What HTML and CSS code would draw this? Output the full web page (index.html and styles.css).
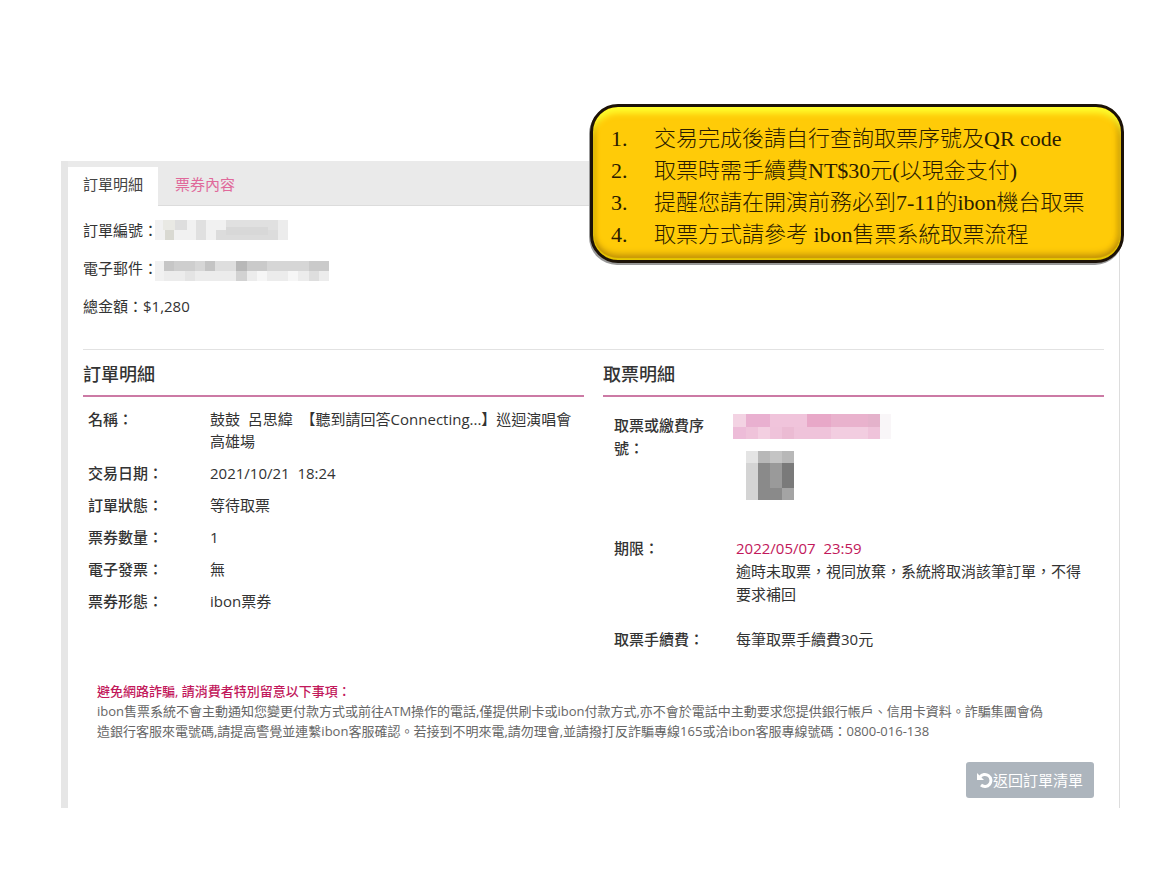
FILE: index.html
```
<!DOCTYPE html>
<html lang="zh-Hant">
<head>
    <meta charset="UTF-8">
    <meta name="viewport" content="width=device-width, initial-scale=1.0">
    <title>訂單明細</title>
    <link rel="stylesheet" href="styles.css">
</head>
<body>
    <main class="order">
        <nav class="tabs">
            <a class="tab active" href="#detail">訂單明細</a>
            <a class="tab" href="#tickets">票券內容</a>
        </nav>

        <div class="order-body" id="detail">
            <p class="field">訂單編號：<svg class="mosaic" width="133" height="20" viewBox="0 0 133 20" shape-rendering="crispEdges">
                <rect width="133" height="20" fill="#f1f1f1"/>
                <rect x="8" width="12" height="10" fill="#e9e9e4"/>
                <rect x="10" y="10" width="9" height="10" fill="#d9d9d2"/>
                <rect x="20" width="12" height="10" fill="#dedede"/>
                <rect x="41" width="10" height="20" fill="#e0e0e0"/>
                <rect x="61" y="10" width="62" height="10" fill="#dcdcdc"/>
                <rect x="71" width="52" height="10" fill="#e0e0e0"/>
                <rect x="71" y="7" width="42" height="8" fill="#d8d8d8"/>
                <rect x="123" width="10" height="20" fill="#ececec"/>
            </svg></p>
            <p class="field">電子郵件：<svg class="mosaic" width="174" height="26" viewBox="0 -6 174 26" shape-rendering="crispEdges">
                <rect width="174" height="10" fill="#d6d6d6"/>
                <rect y="10" width="174" height="10" fill="#ececec"/>
                <rect width="9" height="20" fill="#f1f1f1"/>
                <rect x="9" width="10" height="10" fill="#c6c6c6"/>
                <rect x="19" width="21" height="10" fill="#cecece"/>
                <rect x="50" width="10" height="10" fill="#c4c4c4"/>
                <rect x="60" width="21" height="10" fill="#dedede"/>
                <rect x="81" width="11" height="10" fill="#b8b8b8"/>
                <rect x="92" width="20" height="10" fill="#cacaca"/>
                <rect x="154" width="20" height="10" fill="#cacaca"/>
                <rect x="30" y="10" width="10" height="10" fill="#e4e4e4"/>
                <rect x="81" y="10" width="11" height="10" fill="#d2d2d2"/>
                <rect x="102" y="10" width="10" height="10" fill="#f6f6f6"/>
                <rect x="133" y="10" width="10" height="10" fill="#f6f6f6"/>
                <rect x="154" y="10" width="10" height="10" fill="#dedede"/>
            </svg></p>
            <p class="field">總金額：$1,280</p>

            <hr class="divider">

            <div class="columns">
                <section class="column">
                    <h2>訂單明細</h2>
                    <table class="info">
                        <tr>
                            <th scope="row">名稱：</th>
                            <td>鼓鼓&nbsp; 呂思緯&nbsp; 【聽到請回答Connecting...】巡迴演唱會 高雄場</td>
                        </tr>
                        <tr>
                            <th scope="row">交易日期：</th>
                            <td>2021/10/21&nbsp; 18:24</td>
                        </tr>
                        <tr>
                            <th scope="row">訂單狀態：</th>
                            <td>等待取票</td>
                        </tr>
                        <tr>
                            <th scope="row">票券數量：</th>
                            <td>1</td>
                        </tr>
                        <tr>
                            <th scope="row">電子發票：</th>
                            <td>無</td>
                        </tr>
                        <tr>
                            <th scope="row">票券形態：</th>
                            <td>ibon票券</td>
                        </tr>
                    </table>
                </section>

                <section class="column">
                    <h2>取票明細</h2>
                    <table class="info pickup">
                        <tr>
                            <th scope="row">取票或繳費序號：</th>
                            <td>
                                <svg class="serial" width="158" height="25" viewBox="0 0 158 25" shape-rendering="crispEdges">
                                    <rect width="147" height="25" fill="#efc3da"/>
                                    <rect width="13" height="13" fill="#f3d3e3"/>
                                    <rect x="13" width="24" height="13" fill="#e9b0d0"/>
                                    <rect x="37" width="37" height="13" fill="#f0c4db"/>
                                    <rect x="74" width="24" height="13" fill="#e8a8c8"/>
                                    <rect x="98" width="37" height="13" fill="#e9b2cd"/>
                                    <rect x="135" width="12" height="13" fill="#e4b2cb"/>
                                    <rect y="13" width="13" height="12" fill="#edbcd8"/>
                                    <rect x="25" y="13" width="12" height="12" fill="#f3cfe1"/>
                                    <rect x="49" y="13" width="12" height="12" fill="#ebbbd3"/>
                                    <rect x="98" y="13" width="37" height="12" fill="#f2cde0"/>
                                    <rect x="147" width="11" height="25" fill="#f9f6f8"/>
                                </svg>
                                <svg class="qrcode" width="48" height="49" viewBox="0 0 48 49" shape-rendering="crispEdges">
                                    <rect width="48" height="49" fill="#8a8a8a"/>
                                    <rect width="12" height="12" fill="#e4e4e4"/>
                                    <rect x="12" width="12" height="12" fill="#b8b8b8"/>
                                    <rect x="24" width="12" height="12" fill="#c4c4c4"/>
                                    <rect x="36" width="12" height="12" fill="#b8b8b8"/>
                                    <rect y="12" width="12" height="37" fill="#d4d4d4"/>
                                    <rect x="24" y="12" width="12" height="25" fill="#9a9a9a"/>
                                    <rect x="36" y="12" width="12" height="25" fill="#7a7a7a"/>
                                    <rect x="36" y="37" width="12" height="12" fill="#a4a4a4"/>
                                </svg>
                            </td>
                        </tr>
                        <tr>
                            <th scope="row">期限：</th>
                            <td><span class="deadline">2022/05/07&nbsp; 23:59</span><br>逾時未取票，視同放棄，系統將取消該筆訂單，不得要求補回</td>
                        </tr>
                        <tr>
                            <th scope="row">取票手續費：</th>
                            <td>每筆取票手續費30元</td>
                        </tr>
                    </table>
                </section>
            </div>

            <div class="notice">
                <strong>避免網路詐騙, 請消費者特別留意以下事項：</strong>
                <p>ibon售票系統不會主動通知您變更付款方式或前往ATM操作的電話,僅提供刷卡或ibon付款方式,亦不會於電話中主動要求您提供銀行帳戶、信用卡資料。詐騙集團會偽<br>造銀行客服來電號碼,請提高警覺並連繫ibon客服確認。若接到不明來電,請勿理會,並請撥打反詐騙專線165或洽ibon客服專線號碼：0800-016-138</p>
            </div>

            <div class="actions">
                <button type="button" class="back">
                    <svg width="16" height="16" viewBox="0 0 16 16">
                        <path d="M3 5 A6 6 0 1 1 4 13" fill="none" stroke="#fff" stroke-width="3"/>
                        <path d="M0 1 L0 8 L7 8 Z" fill="#fff"/>
                    </svg>返回訂單清單
                </button>
            </div>
        </div>

        <!-- 取票提醒 -->
        <aside class="callout">
            <ol>
                <li>交易完成後請自行查詢取票序號及QR code</li>
                <li>取票時需手續費NT$30元(以現金支付)</li>
                <li>提醒您請在開演前務必到7-11的ibon機台取票</li>
                <li>取票方式請參考 ibon售票系統取票流程</li>
            </ol>
        </aside>
    </main>
</body>
</html>
```

FILE: styles.css
```
* {
    box-sizing: border-box;
}

body {
    margin: 0;
    padding: 161px 43px 64px 61px;
    background: #fff;
    color: #333;
    font-family: "Open Sans", "Noto Sans CJK TC", sans-serif;
    font-size: 15px;
    line-height: 22px;
}

p, h2, ol {
    margin: 0;
    padding: 0;
}

.order {
    position: relative;
    border-left: 7px solid #e6e6e6;
    border-right: 1px solid #ddd;
}

/* tabs */
.tabs {
    display: flex;
    gap: 2px;
    height: 45px;
    padding-top: 6px;
    background: #eaeaea;
    border-bottom: 1px solid #dcdcdc;
}

.tab {
    height: 39px;
    padding: 6px 15px;
    color: #e0699a;
    text-decoration: none;
}

.tab.active {
    background: #fff;
    color: #444;
}

.order-body {
    padding: 13px 15px 10px;
}

.field {
    display: flex;
    align-items: center;
    height: 22px;
    margin-bottom: 16px;
}

.mosaic {
    margin-left: -3px;
}

.divider {
    margin: 32px 0 12px;
    border: 0;
    border-top: 1px solid #e2e2e2;
}

.columns {
    display: grid;
    grid-template-columns: 1fr 1fr;
    gap: 19px;
}

h2 {
    padding-bottom: 9px;
    border-bottom: 2px solid #cc7aa5;
    font-size: 18px;
    font-weight: 500;
    line-height: 24px;
}

.info {
    width: 100%;
    margin-top: 6px;
    border-collapse: collapse;
    table-layout: fixed;
}

.info th,
.info td {
    padding: 5px;
    text-align: left;
    vertical-align: top;
}

.info th {
    width: 122px;
    font-weight: 500;
}

.pickup {
    line-height: 23px;
}

.pickup th,
.pickup td {
    padding: 11px;
}

.serial {
    display: block;
    margin-left: -3px;
}

.qrcode {
    display: block;
    margin: 12px 0 15px 10px;
}

.deadline {
    color: #c2185b;
}

/* notice */
.notice {
    margin-top: 19px;
    padding: 0 14px;
    color: #666;
    font-size: 13px;
    line-height: 20px;
}

.notice strong {
    color: #c2185b;
    font-weight: 500;
}

.actions {
    display: flex;
    justify-content: flex-end;
    margin-top: 21px;
    padding-right: 10px;
}

.back {
    display: flex;
    align-items: center;
    height: 36px;
    padding: 0 11px;
    border: 0;
    border-radius: 3px;
    background: #adb5bd;
    color: #fff;
    font: inherit;
}

/* callout over the panel */
.callout {
    position: absolute;
    top: -57px;
    right: -5px;
    padding: 16px 26px 9px 18px;
    border: 3px solid #1c1208;
    border-radius: 28px;
    background: #ffcb08;
    box-shadow: inset 0 8px 6px -2px #ffff2e, inset 0 -2px 1px #e8c800, inset 0 -7px 7px -2px #b98a08, inset -5px 0 6px -2px #c99708, inset 3px 0 4px #e0b000, -1px 2px 0 #999;
    color: #2b1c00;
    font-family: "Liberation Serif", "Noto Sans CJK TC", serif;
    font-size: 22px;
    font-weight: 300;
    line-height: 32px;
}

.callout ol {
    width: 484px;
    list-style: none;
    counter-reset: step;
}

.callout li {
    display: flex;
    counter-increment: step;
}

.callout li::before {
    content: counter(step) ".";
    width: 43px;
}
```
